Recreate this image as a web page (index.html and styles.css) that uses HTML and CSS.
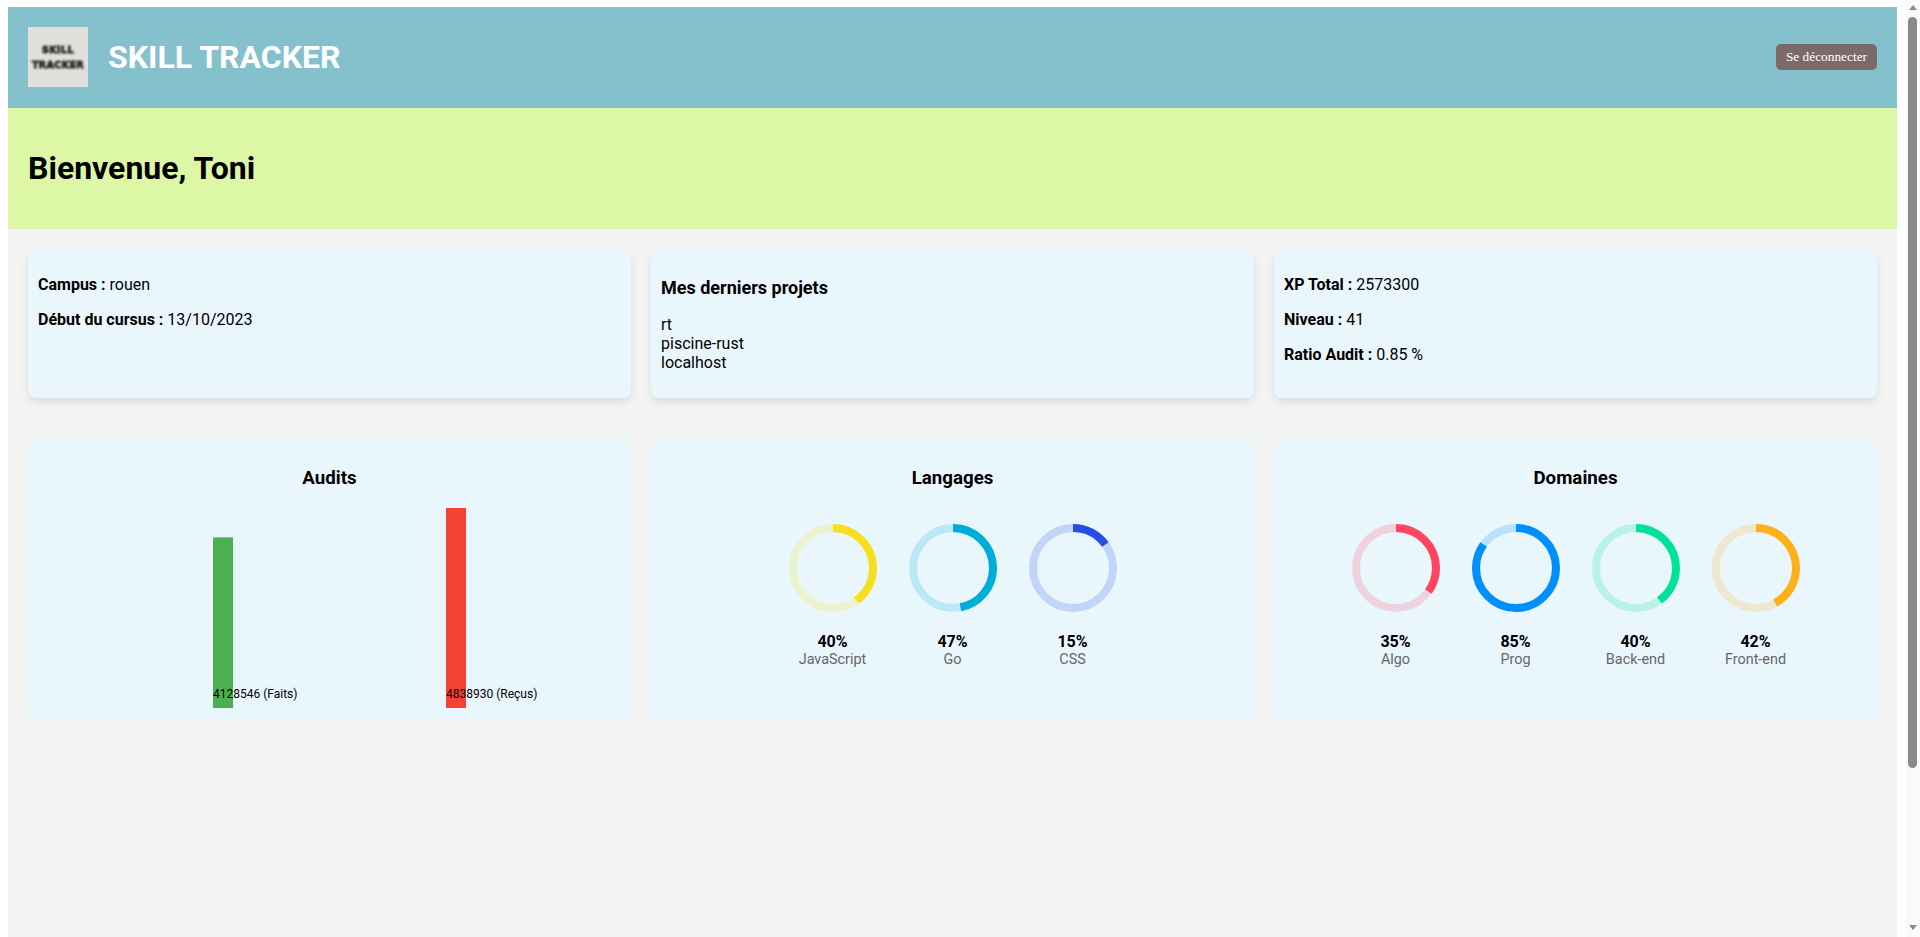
FILE: index.html
```html
<!DOCTYPE html>
<html lang="fr">
<head>
<meta charset="UTF-8">
<meta name="viewport" content="width=device-width, initial-scale=1.0">
<title>Skill Tracker</title>
<link rel="stylesheet" href="styles.css">
</head>
<body>

<header class="top-bar">
  <div class="brand">
    <div class="logo"><span>SKILL</span><span>TRACKER</span></div>
    <h1 class="brand-name">SKILL TRACKER</h1>
  </div>
  <button class="logout" type="button">Se déconnecter</button>
</header>

<section class="welcome">
  <h1>Bienvenue, Toni</h1>
</section>

<main class="content">
  <div class="row info-row">
    <div class="card info-card">
      <p><strong>Campus :</strong> rouen</p>
      <p><strong>Début du cursus :</strong> 13/10/2023</p>
    </div>
    <div class="card info-card">
      <h3>Mes derniers projets</h3>
      <p>rt<br>piscine-rust<br>localhost</p>
    </div>
    <div class="card info-card">
      <p><strong>XP Total :</strong> 2573300</p>
      <p><strong>Niveau :</strong> 41</p>
      <p><strong>Ratio Audit :</strong> 0.85 %</p>
    </div>
  </div>

  <div class="row chart-row">
    <div class="card chart-card">
      <h3>Audits</h3>
      <svg class="audit-chart" width="583" height="200">
        <rect x="175" y="29.4" width="20" height="170.6" fill="#4caf50"></rect>
        <text x="175" y="190">4128546 (Faits)</text>
        <rect x="408" y="0" width="20" height="200" fill="#f44336"></rect>
        <text x="408" y="190">4838930 (Reçus)</text>
      </svg>
    </div>

    <div class="card chart-card">
      <h3>Langages</h3>
      <div class="rings">
        <div class="ring">
          <svg width="100" height="100" viewBox="0 0 100 100">
            <circle class="track" cx="50" cy="50" r="40" stroke="#f7df1e"></circle>
            <circle class="arc" cx="50" cy="50" r="40" stroke="#f7df1e" pathLength="100" stroke-dasharray="40 100"></circle>
          </svg>
          <div class="ring-value">40%</div>
          <div class="ring-label">JavaScript</div>
        </div>
        <div class="ring">
          <svg width="100" height="100" viewBox="0 0 100 100">
            <circle class="track" cx="50" cy="50" r="40" stroke="#00add8"></circle>
            <circle class="arc" cx="50" cy="50" r="40" stroke="#00add8" pathLength="100" stroke-dasharray="47 100"></circle>
          </svg>
          <div class="ring-value">47%</div>
          <div class="ring-label">Go</div>
        </div>
        <div class="ring">
          <svg width="100" height="100" viewBox="0 0 100 100">
            <circle class="track" cx="50" cy="50" r="40" stroke="#264de4"></circle>
            <circle class="arc" cx="50" cy="50" r="40" stroke="#264de4" pathLength="100" stroke-dasharray="15 100"></circle>
          </svg>
          <div class="ring-value">15%</div>
          <div class="ring-label">CSS</div>
        </div>
      </div>
    </div>

    <div class="card chart-card">
      <h3>Domaines</h3>
      <div class="rings">
        <div class="ring">
          <svg width="100" height="100" viewBox="0 0 100 100">
            <circle class="track" cx="50" cy="50" r="40" stroke="#ff4560"></circle>
            <circle class="arc" cx="50" cy="50" r="40" stroke="#ff4560" pathLength="100" stroke-dasharray="35 100"></circle>
          </svg>
          <div class="ring-value">35%</div>
          <div class="ring-label">Algo</div>
        </div>
        <div class="ring">
          <svg width="100" height="100" viewBox="0 0 100 100">
            <circle class="track" cx="50" cy="50" r="40" stroke="#008ffb"></circle>
            <circle class="arc" cx="50" cy="50" r="40" stroke="#008ffb" pathLength="100" stroke-dasharray="85 100"></circle>
          </svg>
          <div class="ring-value">85%</div>
          <div class="ring-label">Prog</div>
        </div>
        <div class="ring">
          <svg width="100" height="100" viewBox="0 0 100 100">
            <circle class="track" cx="50" cy="50" r="40" stroke="#00e396"></circle>
            <circle class="arc" cx="50" cy="50" r="40" stroke="#00e396" pathLength="100" stroke-dasharray="40 100"></circle>
          </svg>
          <div class="ring-value">40%</div>
          <div class="ring-label">Back-end</div>
        </div>
        <div class="ring">
          <svg width="100" height="100" viewBox="0 0 100 100">
            <circle class="track" cx="50" cy="50" r="40" stroke="#feb019"></circle>
            <circle class="arc" cx="50" cy="50" r="40" stroke="#feb019" pathLength="100" stroke-dasharray="42 100"></circle>
          </svg>
          <div class="ring-value">42%</div>
          <div class="ring-label">Front-end</div>
        </div>
      </div>
    </div>
  </div>
</main>

<div class="scrollbar">
  <div class="scroll-arrow up"></div>
  <div class="scroll-thumb"></div>
  <div class="scroll-arrow down"></div>
</div>

</body>
</html>
```

FILE: styles.css
```css
body {
  font-family: Roboto, sans-serif;
  margin: 7px 23px 8px 8px;
  color: #000;
}
.top-bar {
  display: flex;
  justify-content: space-between;
  align-items: center;
  padding: 20px 20px 21px;
  background-color: #85c1cd;
}
.brand {
  display: flex;
  align-items: center;
  gap: 20px;
}
.logo {
  width: 60px;
  height: 60px;
  display: flex;
  flex-direction: column;
  align-items: center;
  justify-content: center;
  background-color: #e1e0dc;
  color: #2a2a2a;
  font-family: "DejaVu Sans", sans-serif;
  font-size: 9.5px;
  font-weight: 700;
  line-height: 15px;
  letter-spacing: 0.4px;
  -webkit-text-stroke: 0.9px #2a2a2a;
}
.logo span {
  filter: blur(0.8px);
}
.brand-name {
  margin: 0;
  font-size: 32px;
  color: #fff;
}
.logout {
  padding: 5px 10px;
  border: none;
  border-radius: 5px;
  background-color: #7c6a6b;
  color: #fff;
  font-family: "Liberation Serif", serif;
  font-size: 13.33px;
}
.welcome {
  padding: 20px;
  background-color: #dcf7a5;
}
.welcome h1 {
  font-size: 32px;
}
.content {
  min-height: 892px;
  padding: 20px;
  box-sizing: border-box;
  background-color: #f4f4f4;
}
.row {
  display: grid;
  grid-template-columns: repeat(3, 1fr);
  gap: 20px;
}
.info-row {
  margin-bottom: 40px;
}
.card {
  padding: 10px;
  border-radius: 8px;
  background-color: #e9f7fd;
}
.info-card {
  box-shadow: 0 4px 8px rgba(0, 0, 0, 0.1);
}
.info-card h3 {
  font-size: 18px;
  margin: 18px 0 17px;
}
.chart-card {
  text-align: center;
}
.audit-chart {
  margin-top: 1px;
}
.audit-chart text {
  font-size: 12px;
  font-family: Roboto, sans-serif;
}
.rings {
  display: flex;
  justify-content: center;
  gap: 20px;
  padding-top: 11px;
}
.ring {
  width: 100px;
}
.ring svg {
  display: block;
  margin-bottom: 14px;
}
.ring circle {
  fill: none;
  stroke-width: 8;
}
.ring .track {
  stroke-opacity: 0.2;
}
.ring .arc {
  transform: rotate(-90deg);
  transform-origin: 50px 50px;
}
.ring-value {
  font-weight: 700;
}
.ring-label {
  font-size: 14.4px;
  color: #666;
}

/* the window scrollbar, the screenshot browser hides the real one */
.scrollbar {
  position: fixed;
  top: 0;
  right: 0;
  bottom: 0;
  width: 15px;
  box-sizing: border-box;
  padding: 5px 3px 7px;
  display: flex;
  flex-direction: column;
  align-items: center;
  background-color: #fafafa;
}
.scroll-arrow {
  width: 0;
  height: 0;
  border-left: 4.5px solid transparent;
  border-right: 4.5px solid transparent;
}
.scroll-arrow.up {
  border-bottom: 5px solid #8a8a8a;
}
.scroll-arrow.down {
  border-top: 5px solid #8a8a8a;
  margin-top: auto;
}
.scroll-thumb {
  width: 9px;
  height: 751px;
  margin-top: 7px;
  border-radius: 5px;
  background-color: #8a8a8a;
}
```
